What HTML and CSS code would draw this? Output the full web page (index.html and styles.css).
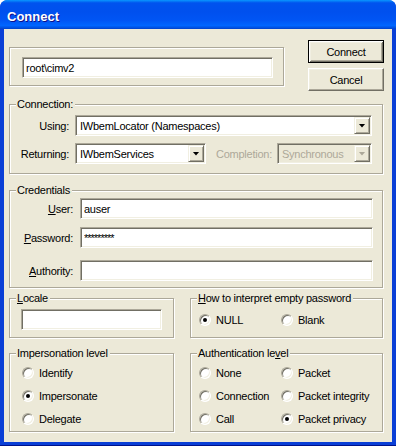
FILE: index.html
```html
<!DOCTYPE html>
<html lang="en">
<head>
  <meta charset="UTF-8" />
  <title>Connect</title>
  <link rel="stylesheet" href="styles.css">
</head>
<body>
  <div class="window">
    <div class="titlebar">Connect</div>

    <div class="client">
      <div class="row-top">
        <div class="group ns">
          <div class="gbody">
            <input type="text" class="edit ns-edit" value="root\cimv2" />
          </div>
        </div>
        <div class="buttons">
          <button class="btn default">Connect</button>
          <button class="btn">Cancel</button>
        </div>
      </div>

      <div class="group connection">
        <div class="gtitle">Connection:</div>
        <div class="gbody">
          <div class="line">
            <span class="lbl conn-lbl">Using:</span>
            <div class="combo using">
              <span class="combo-text">IWbemLocator (Namespaces)</span>
              <span class="drop"></span>
            </div>
          </div>
          <div class="line">
            <span class="lbl conn-lbl">Returning:</span>
            <div class="combo returning">
              <span class="combo-text">IWbemServices</span>
              <span class="drop"></span>
            </div>
            <span class="lbl disabled completion-lbl">Completion:</span>
            <div class="combo completion off">
              <span class="combo-text">Synchronous</span>
              <span class="drop"></span>
            </div>
          </div>
        </div>
      </div>

      <div class="group credentials">
        <div class="gtitle">Credentials</div>
        <div class="gbody">
          <div class="line">
            <span class="lbl cred-lbl"><u>U</u>ser:</span>
            <input type="text" class="edit cred-edit" value="auser" />
          </div>
          <div class="line">
            <span class="lbl cred-lbl"><u>P</u>assword:</span>
            <input type="text" class="edit cred-edit pwd" value="*********" />
          </div>
          <div class="line authority">
            <span class="lbl cred-lbl"><u>A</u>uthority:</span>
            <input type="text" class="edit cred-edit" value="" />
          </div>
        </div>
      </div>

      <div class="row-pair locale-row">
        <div class="group locale">
          <div class="gtitle"><u>L</u>ocale</div>
          <div class="gbody">
            <input type="text" class="edit locale-edit" value="" />
          </div>
        </div>
        <div class="group empty-pwd">
          <div class="gtitle"><u>H</u>ow to interpret empty password</div>
          <div class="gbody opts two">
            <label class="opt"><span class="radio on"></span>NULL</label>
            <label class="opt"><span class="radio"></span>Blank</label>
          </div>
        </div>
      </div>

      <div class="row-pair level-row">
        <div class="group imp">
          <div class="gtitle">Impersonation level</div>
          <div class="gbody opts stack">
            <label class="opt"><span class="radio"></span>Identify</label>
            <label class="opt"><span class="radio on"></span>Impersonate</label>
            <label class="opt"><span class="radio"></span>Delegate</label>
          </div>
        </div>
        <div class="group auth">
          <div class="gtitle">Authentication le<u>v</u>el</div>
          <div class="gbody opts grid">
            <label class="opt"><span class="radio"></span>None</label>
            <label class="opt"><span class="radio"></span>Packet</label>
            <label class="opt"><span class="radio"></span>Connection</label>
            <label class="opt"><span class="radio"></span>Packet integrity</label>
            <label class="opt"><span class="radio"></span>Call</label>
            <label class="opt"><span class="radio on"></span>Packet privacy</label>
          </div>
        </div>
      </div>
    </div>
  </div>
</body>
</html>
```

FILE: styles.css
```css
body {
  margin: 0;
  background: #ffffff;
  font-family: "Liberation Sans", Arial, sans-serif;
  font-size: 11px;
  letter-spacing: -0.25px;
  color: #000000;
}
.window {
  width: 396px;
  height: 446px;
  display: flex;
  flex-direction: column;
  background: #0a3fd6;
  border-radius: 8px 8px 0 0;
  box-shadow: inset 0 -1px 0 #00138c;
}
.titlebar {
  height: 29px;
  box-sizing: border-box;
  padding: 9px 0 0 7px;
  line-height: 15px;
  font-size: 13px;
  font-weight: bold;
  letter-spacing: 0;
  color: #ffffff;
  text-shadow: 1px 1px 0 #0f1089;
  border-radius: 7px 7px 0 0;
  background: linear-gradient(to bottom, #0997ff 0%, #0053ee 10%, #0050ee 40%, #0055f4 70%, #0066ff 88%, #0050e0 96%, #0040c8 100%);
}
.client {
  flex: 1;
  margin: 0 4px 4px 4px;
  background: #ece9d8;
  padding: 11px 8px 0 5px;
  display: flex;
  flex-direction: column;
}

/* group boxes */
.group {
  box-sizing: border-box;
  border: 1px solid #aca899;
  box-shadow: inset 1px 1px 0 #ffffff, 1px 1px 0 #ffffff;
}
.gtitle {
  width: fit-content;
  height: 13px;
  line-height: 13px;
  margin: -7px 0 -6px 6px;
  padding: 0 2px 0 1px;
  background: #ece9d8;
}

.row-top {
  display: flex;
  align-items: flex-start;
}
.ns {
  margin-top: 7px;
  width: 275px;
  height: 39px;
}
.ns .gbody { padding: 9px 0 0 12px; }
.buttons {
  margin-left: auto;
  display: flex;
  flex-direction: column;
  gap: 5px;
}
.btn {
  width: 76px;
  height: 23px;
  padding: 0;
  font: inherit;
  letter-spacing: inherit;
  color: #000000;
  background: #ece9d8;
  border: 1px solid;
  border-color: #ffffff #716f64 #716f64 #ffffff;
  box-shadow: inset -1px -1px 0 #aca899, inset 1px 1px 0 #f1efe2;
}
.btn.default {
  border-color: #000000;
  box-shadow: inset 1px 1px 0 #ffffff, inset -1px -1px 0 #716f64, inset 2px 2px 0 #f1efe2, inset -2px -2px 0 #aca899;
}

/* sunken fields */
.edit, .combo {
  box-sizing: border-box;
  height: 21px;
  border: 1px solid;
  border-color: #aca899 #ffffff #ffffff #aca899;
  box-shadow: inset 1px 1px 0 #716f64, inset -1px -1px 0 #f1efe2;
  background: #ffffff;
}
.edit {
  display: block;
  padding: 0 3px;
  font: inherit;
  letter-spacing: inherit;
  color: #000000;
  outline: none;
}
.ns-edit { width: 251px; }
.pwd { letter-spacing: -1px; }

.combo {
  display: flex;
  align-items: center;
  padding: 1px;
}
.combo-text {
  flex: 1;
  padding-left: 3px;
  white-space: nowrap;
  overflow: hidden;
}
.drop {
  box-sizing: border-box;
  width: 16px;
  height: 17px;
  display: flex;
  align-items: center;
  justify-content: center;
  background: #ece9d8;
  border: 1px solid;
  border-color: #f1efe2 #716f64 #716f64 #f1efe2;
  box-shadow: inset 1px 1px 0 #ffffff, inset -1px -1px 0 #aca899;
}
.drop::after {
  content: "";
  width: 7px;
  height: 4px;
  background: #000000;
  clip-path: polygon(0 0, 100% 0, 50% 100%);
}
.combo.off { background: #ece9d8; color: #aca899; }
.combo.off .drop::after { background: #aca899; }

.line {
  display: flex;
  align-items: center;
}
.lbl {
  flex: none;
  white-space: nowrap;
}
.disabled { color: #aca899; }

.connection {
  margin-top: 13px;
  width: 374px;
  height: 70px;
}
.connection .gbody {
  padding-top: 10px;
  display: flex;
  flex-direction: column;
  gap: 7px;
}
.conn-lbl {
  width: 59px;
  text-align: right;
  margin-right: 6px;
}
.using { width: 297px; }
.returning { width: 131px; }
.completion-lbl { margin-left: 10px; }
.completion { width: 95px; margin-left: auto; margin-right: 10px; }

.credentials {
  margin-top: 16px;
  width: 374px;
  height: 98px;
}
.credentials .gbody {
  padding-top: 7px;
  display: flex;
  flex-direction: column;
  gap: 8px;
}
.credentials .authority { margin-top: 4px; }
.cred-lbl {
  width: 63px;
  text-align: right;
  margin-right: 7px;
}
.cred-edit { width: 293px; }

.row-pair {
  display: flex;
  gap: 16px;
}
.locale-row { margin-top: 10px; }
.level-row { margin-top: 15px; }

.locale {
  width: 165px;
  height: 40px;
}
.locale .gbody { padding: 10px 0 0 11px; }
.locale-edit { width: 141px; }
.empty-pwd {
  width: 193px;
  height: 40px;
}
.empty-pwd .gbody { padding: 12px 0 0 8px; }
.imp {
  width: 165px;
  height: 79px;
}
.imp .gbody { padding: 10px 0 0 12px; }
.auth {
  width: 193px;
  height: 79px;
}
.auth .gbody { padding: 10px 0 0 8px; }

/* radio buttons */
.opts.two { display: flex; }
.opts.two .opt { width: 82px; }
.opts.stack {
  display: flex;
  flex-direction: column;
  gap: 6px;
}
.opts.grid {
  display: grid;
  grid-template-columns: 82px auto;
  row-gap: 6px;
}
.opt {
  height: 17px;
  display: flex;
  align-items: center;
  gap: 5px;
  white-space: nowrap;
}
.radio {
  box-sizing: border-box;
  width: 12px;
  height: 12px;
  border-radius: 50%;
  display: flex;
  align-items: center;
  justify-content: center;
  background: #ffffff;
  border: 1px solid;
  border-color: #aca899 #ffffff #ffffff #aca899;
  box-shadow: inset 1px 1px 0 #716f64, inset -1px -1px 0 #f1efe2;
}
.radio.on::after {
  content: "";
  width: 4px;
  height: 4px;
  border-radius: 50%;
  background: #000000;
}
```
